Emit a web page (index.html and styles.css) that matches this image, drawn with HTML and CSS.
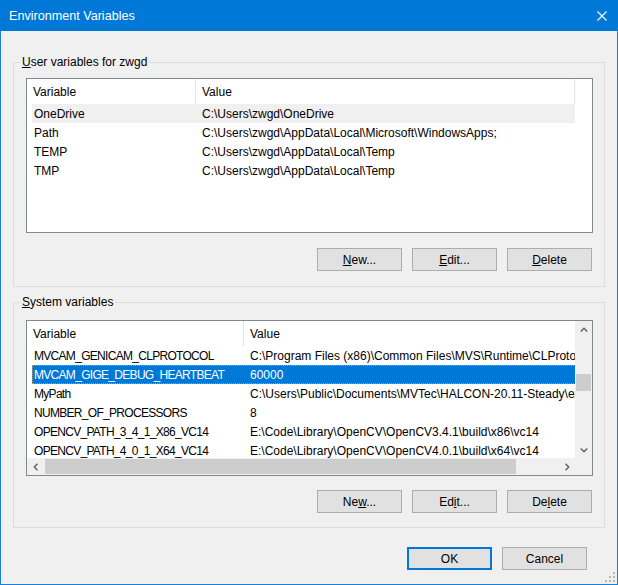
FILE: index.html
```html
<!DOCTYPE html>
<html>
<head>
<meta charset="utf-8">
<title>Environment Variables</title>
<link rel="stylesheet" href="styles.css">
</head>
<body>
<div class="window">
  <div class="titlebar">
    <span class="title">Environment Variables</span>
    <svg class="close" width="10" height="10" viewBox="0 0 10 10"><path d="M0.5 0.5 L9.5 9.5 M9.5 0.5 L0.5 9.5" stroke="#fff" stroke-width="1.1" fill="none"/></svg>
  </div>
  <div class="client">
    <fieldset class="group group-user">
      <legend><u>U</u>ser variables for zwgd</legend>
      <div class="list list-user">
        <div class="viewport">
          <div class="lv-header">
            <div class="hcell uvar">Variable</div>
            <div class="hcell uval">Value</div>
          </div>
          <div class="lv-row is-hot"><span class="cell uvar">OneDrive</span><span class="cell uval">C:\Users\zwgd\OneDrive</span></div>
          <div class="lv-row"><span class="cell uvar">Path</span><span class="cell uval">C:\Users\zwgd\AppData\Local\Microsoft\WindowsApps;</span></div>
          <div class="lv-row"><span class="cell uvar">TEMP</span><span class="cell uval">C:\Users\zwgd\AppData\Local\Temp</span></div>
          <div class="lv-row"><span class="cell uvar">TMP</span><span class="cell uval">C:\Users\zwgd\AppData\Local\Temp</span></div>
        </div>
      </div>
      <div class="btnrow">
        <button class="btn"><u>N</u>ew...</button>
        <button class="btn"><u>E</u>dit...</button>
        <button class="btn"><u>D</u>elete</button>
      </div>
    </fieldset>

    <fieldset class="group group-sys">
      <legend><u>S</u>ystem variables</legend>
      <div class="list list-sys">
        <div class="viewport">
          <div class="lv-header">
            <div class="hcell svar">Variable</div>
            <div class="hcell sval">Value</div>
          </div>
          <div class="lv-row"><span class="cell svar">MVCAM_GENICAM_CLPROTOCOL</span><span class="cell sval">C:\Program Files (x86)\Common Files\MVS\Runtime\CLProtocol</span></div>
          <div class="lv-row is-selected"><span class="cell svar">MVCAM_GIGE_DEBUG_HEARTBEAT</span><span class="cell sval">60000</span></div>
          <div class="lv-row"><span class="cell svar">MyPath</span><span class="cell sval">C:\Users\Public\Documents\MVTec\HALCON-20.11-Steady\examples</span></div>
          <div class="lv-row"><span class="cell svar">NUMBER_OF_PROCESSORS</span><span class="cell sval">8</span></div>
          <div class="lv-row"><span class="cell svar">OPENCV_PATH_3_4_1_X86_VC14</span><span class="cell sval">E:\Code\Library\OpenCV\OpenCV3.4.1\build\x86\vc14</span></div>
          <div class="lv-row"><span class="cell svar">OPENCV_PATH_4_0_1_X64_VC14</span><span class="cell sval">E:\Code\Library\OpenCV\OpenCV4.0.1\build\x64\vc14</span></div>
        </div>
        <div class="vscroll">
          <div class="sb-btn"><svg width="8" height="8" viewBox="0 0 8 8"><polyline points="0.8,5.5 4,2.3 7.2,5.5" fill="none" stroke="#606060" stroke-width="1.4"/></svg></div>
          <div class="vtrack"><div class="vthumb"></div></div>
          <div class="sb-btn"><svg width="8" height="8" viewBox="0 0 8 8"><polyline points="0.8,2.5 4,5.7 7.2,2.5" fill="none" stroke="#606060" stroke-width="1.4"/></svg></div>
        </div>
        <div class="hscroll">
          <div class="sb-btn"><svg width="8" height="8" viewBox="0 0 8 8"><polyline points="5.5,0.8 2.3,4 5.5,7.2" fill="none" stroke="#606060" stroke-width="1.4"/></svg></div>
          <div class="htrack"><div class="hthumb"></div></div>
          <div class="sb-btn"><svg width="8" height="8" viewBox="0 0 8 8"><polyline points="2.5,0.8 5.7,4 2.5,7.2" fill="none" stroke="#606060" stroke-width="1.4"/></svg></div>
        </div>
        <div class="sb-corner"></div>
      </div>
      <div class="btnrow">
        <button class="btn">Ne<u>w</u>...</button>
        <button class="btn">Ed<u>i</u>t...</button>
        <button class="btn">De<u>l</u>ete</button>
      </div>
    </fieldset>

    <div class="dlgbtns">
      <button class="btn btn-default">OK</button>
      <button class="btn">Cancel</button>
    </div>

    <svg class="grip" width="10" height="10" viewBox="0 0 10 10">
      <rect x="8" y="0" width="2" height="2" fill="#b8b8b8"/>
      <rect x="4" y="4" width="2" height="2" fill="#b8b8b8"/>
      <rect x="8" y="4" width="2" height="2" fill="#b8b8b8"/>
      <rect x="0" y="8" width="2" height="2" fill="#b8b8b8"/>
      <rect x="4" y="8" width="2" height="2" fill="#b8b8b8"/>
      <rect x="8" y="8" width="2" height="2" fill="#b8b8b8"/>
    </svg>
  </div>
</div>
</body>
</html>
```

FILE: styles.css
```css
* { box-sizing: border-box; }

html, body {
  margin: 0;
  padding: 0;
}

body {
  width: 618px;
  height: 585px;
  overflow: hidden;
  background: #f0f0f0;
  font-family: "Liberation Sans", Arial, sans-serif;
  font-size: 12px;
  color: #000;
}

.window {
  width: 618px;
  height: 585px;
  display: flex;
  flex-direction: column;
}

.titlebar {
  flex: none;
  height: 31px;
  background: #0078d7;
  color: #fff;
  display: flex;
  align-items: center;
  justify-content: space-between;
  padding: 0 11px 0 9px;
}

.title {
  font-size: 12.6px;
  line-height: 16px;
  padding-top: 1px;
}

.close {
  display: block;
}

.client {
  flex: 1;
  position: relative;
  display: flex;
  flex-direction: column;
  background: #f0f0f0;
  border: 1px solid #1a80d6;
  border-top: none;
  padding: 0 12px;
}

.group {
  margin: 0;
  min-width: 0;
  border: 1px solid #dcdcdc;
}

.group legend {
  height: 16px;
  line-height: 15px;
  padding: 1px 2px 0 2px;
  margin-left: -6px;
}

.group-user {
  margin-top: 23px;
  padding: 8px 11px 15px 12px;
}

.group-sys {
  margin-top: 7px;
  padding: 10px 11px 14px 12px;
}

.list {
  background: #fff;
  border: 1px solid #828790;
  overflow: hidden;
}

.list-user {
  height: 155px;
}

.list-sys {
  height: 156px;
  display: grid;
  grid-template-columns: 1fr 17px;
  grid-template-rows: 1fr 17px;
}

.viewport {
  height: 100%;
  overflow: hidden;
  padding-left: 5px;
  min-width: 0;
}

.lv-header {
  display: flex;
  height: 25px;
  white-space: nowrap;
}

.hcell {
  flex: none;
  line-height: 23px;
  padding-top: 2px;
  padding-left: 6px;
  border-right: 1px solid #e5e5e5;
  white-space: nowrap;
  overflow: hidden;
}

.lv-row {
  display: flex;
  height: 19px;
  white-space: nowrap;
  width: max-content;
}

.cell {
  flex: none;
  height: 19px;
  line-height: 17px;
  padding-top: 2px;
  padding-left: 6px;
  white-space: nowrap;
  overflow: hidden;
}

.hcell.uvar, .hcell.svar { padding-left: 1px; }
.cell.uvar, .cell.svar { padding-left: 2px; }
.cell.svar { letter-spacing: -0.7px; }

.uvar { width: 164px; }
.uval { width: 379px; }
.svar { width: 212px; }
.sval { width: 620px; }

.lv-row.is-hot {
  background: #f0f0f0;
}

.lv-row.is-selected {
  background: #0078d7;
  color: #fff;
  outline: 1px dotted #ff8728;
  outline-offset: -1px;
}

.vscroll {
  background: #f0f0f0;
  display: flex;
  flex-direction: column;
}

.hscroll {
  background: #f0f0f0;
  display: flex;
  min-width: 0;
}

.sb-corner {
  background: #f0f0f0;
}

.sb-btn {
  flex: none;
  width: 17px;
  height: 17px;
  display: flex;
  align-items: center;
  justify-content: center;
}

.sb-btn svg {
  display: block;
}

.vtrack {
  flex: 1;
}

.vthumb {
  margin: 36px 1px 0 1px;
  height: 17px;
  background: #cdcdcd;
}

.htrack {
  flex: 1;
  padding: 1px 0;
}

.hthumb {
  margin-left: 1px;
  width: 471px;
  height: 15px;
  background: #cdcdcd;
}

.btnrow {
  display: flex;
  justify-content: flex-end;
  gap: 10px;
  margin-top: 15px;
  margin-right: 1px;
}

.group-sys .btnrow {
  margin-top: 14px;
}

.btn {
  width: 85px;
  height: 23px;
  padding: 0;
  margin: 0;
  background: #e1e1e1;
  border: 1px solid #adadad;
  border-radius: 0;
  font-family: inherit;
  font-size: 12px;
  color: #000;
  line-height: 20px;
}

.btn-default {
  border: 2px solid #0078d7;
}

.dlgbtns {
  display: flex;
  justify-content: flex-end;
  gap: 10px;
  margin-top: 19px;
  margin-right: 18px;
}

.grip {
  position: absolute;
  right: 2px;
  bottom: 2px;
}
```
